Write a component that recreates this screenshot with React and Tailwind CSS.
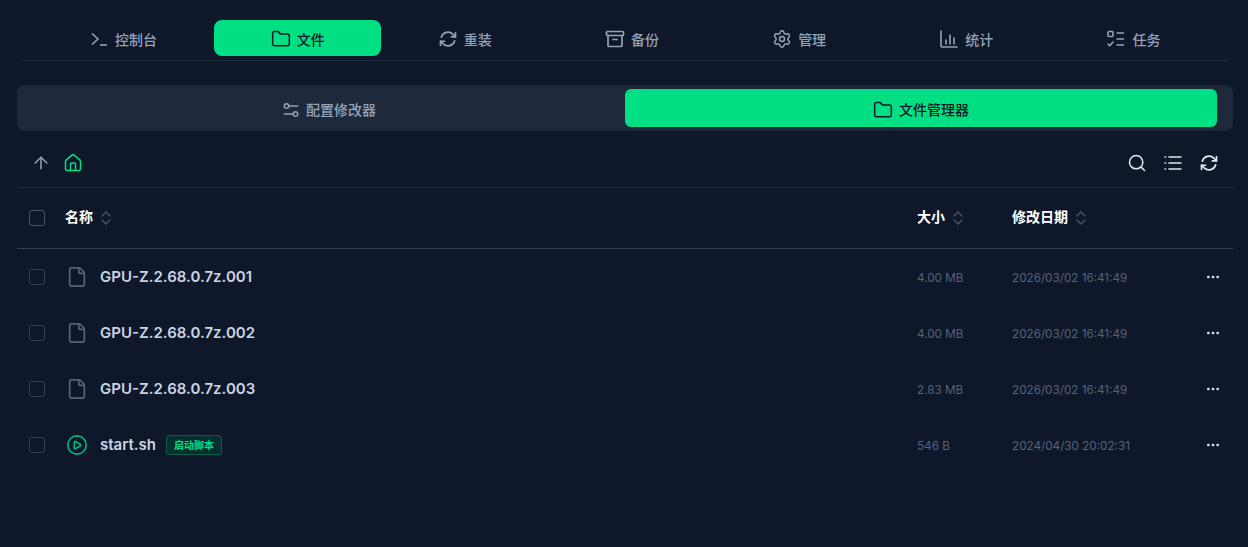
import {
  ArrowUp,
  Ellipsis,
  File,
  Folder,
  House,
  CirclePlay,
  Search,
  Settings,
} from "lucide-react";

const font = "font-['Inter','Noto_Sans_CJK_SC',sans-serif]";

const TerminalIcon = ({ className }) => (
  <svg viewBox="0 0 20 20" fill="none" stroke="currentColor" strokeWidth="1.6" className={className}>
    <path d="M3 4.5 9 10l-6 5.5" />
    <path d="M11 16h7" />
  </svg>
);

const RefreshIcon = ({ className }) => (
  <svg viewBox="0 0 24 24" fill="none" stroke="currentColor" strokeWidth="2" strokeLinecap="round" strokeLinejoin="round" className={className}>
    <path d="M16 9.35h5V4.35" />
    <path d="M3 19.65v-5h5" />
    <path d="M3 14.65l3.2 3.2a8.25 8.25 0 0 0 13.8-3.7" />
    <path d="M4 9.85a8.25 8.25 0 0 1 13.8-3.7l3.2 3.2" />
  </svg>
);

const ArchiveIcon = ({ className }) => (
  <svg viewBox="0 0 20 20" fill="none" stroke="currentColor" strokeWidth="1.7" strokeLinecap="round" strokeLinejoin="round" className={className}>
    <rect x="1.5" y="2.5" width="17" height="4" rx="1" />
    <path d="M3 6.5V16.5a1 1 0 0 0 1 1h12a1 1 0 0 0 1-1V6.5" />
    <path d="M8 10.5h4" />
  </svg>
);

const ChartIcon = ({ className }) => (
  <svg viewBox="0 0 20 20" fill="none" stroke="currentColor" strokeWidth="1.6" strokeLinecap="round" className={className}>
    <path d="M2 2v15a1 1 0 0 0 1 1h15" />
    <path d="M7 11v4M11 6v9M15 9v6" />
  </svg>
);

const TasksIcon = ({ className }) => (
  <svg viewBox="0 0 20 20" fill="none" stroke="currentColor" strokeWidth="1.6" strokeLinecap="round" strokeLinejoin="round" className={className}>
    <rect x="2" y="2.5" width="5" height="5" rx="1" />
    <path d="M2 15l1.7 1.7L7 13" />
    <path d="M11 4h6.5M11 10h6.5M11 16h6.5" />
  </svg>
);

const SliderIcon = ({ className }) => (
  <svg viewBox="0 0 20 20" fill="none" stroke="currentColor" strokeWidth="1.6" strokeLinecap="round" className={className}>
    <circle cx="5" cy="5.5" r="2.5" />
    <path d="M7.5 5.5h10" />
    <circle cx="15" cy="14.5" r="2.5" />
    <path d="M2.5 14.5h10" />
  </svg>
);

const ListIcon = ({ className }) => (
  <svg viewBox="0 0 20 20" fill="none" stroke="currentColor" strokeWidth="1.6" strokeLinecap="round" className={className}>
    <path d="M6 4h12M6 10h12M6 16h12" />
    <path d="M2 4h.5M2 10h.5M2 16h.5" />
  </svg>
);

const SortIcon = () => (
  <svg viewBox="0 0 10 16" fill="none" stroke="currentColor" strokeWidth="1.4" strokeLinecap="round" strokeLinejoin="round" className="h-4 w-[10px] text-[#475569]">
    <path d="M1 6 5 2l4 4" />
    <path d="M1 10l4 4 4-4" />
  </svg>
);

const tabs = [
  { label: "控制台", icon: TerminalIcon },
  { label: "文件", icon: Folder, active: true },
  { label: "重装", icon: RefreshIcon },
  { label: "备份", icon: ArchiveIcon },
  { label: "管理", icon: Settings },
  { label: "统计", icon: ChartIcon },
  { label: "任务", icon: TasksIcon },
];

const files = [
  { name: "GPU-Z.2.68.0.7z.001", size: "4.00 MB", date: "2026/03/02 16:41:49" },
  { name: "GPU-Z.2.68.0.7z.002", size: "4.00 MB", date: "2026/03/02 16:41:49" },
  { name: "GPU-Z.2.68.0.7z.003", size: "2.83 MB", date: "2026/03/02 16:41:49" },
  { name: "start.sh", size: "546 B", date: "2024/04/30 20:02:31", script: true },
];

const Checkbox = ({ header }) => (
  <span className={`block h-4 w-4 rounded-[3px] border ${header ? "border-[#475569]" : "border-[#334155]"}`} />
);

export default function App() {
  return (
    <div className={`${font} relative h-[547px] overflow-hidden bg-[#0f172a] pl-[17px] pr-[15px] pt-5`}>
      <nav className="grid h-[41px] grid-cols-7 rounded-b-lg border-b border-[#1e293b] pl-[30px] pr-[16px]">
        {tabs.map(({ label, icon: Icon, active }, i) => (
          <button
            key={label}
            className={`flex h-9 items-center justify-center gap-1.5 rounded-lg text-sm font-medium ${
              active ? "bg-[#00df82] text-[#0f172a]" : "text-[#94a3b8]"
            } ${i === 0 ? "pr-[15px]" : ""}`}
          >
            <Icon className="mt-0.5 h-5 w-5" strokeWidth={1.8} />
            <span className="pt-[3px]">{label}</span>
          </button>
        ))}
      </nav>

      <div className="mt-6 grid h-[46px] grid-cols-2 rounded-lg bg-[#1e293b] px-4 py-1">
        <button className="flex items-center justify-center gap-1.5 rounded-md text-sm font-medium text-[#94a3b8]">
          <SliderIcon className="mt-1 h-[18px] w-[18px]" />
          <span className="pt-1">配置修改器</span>
        </button>
        <button className="flex items-center justify-center gap-1.5 rounded-md bg-[#00df82] text-sm font-medium text-[#0f172a]">
          <Folder className="mt-1 h-5 w-5" strokeWidth={1.8} />
          <span className="pt-1">文件管理器</span>
        </button>
      </div>

      <div className="mt-[9px] flex h-[48px] items-center justify-between border-b border-[#1e293b] px-[14px] pb-0.5">
        <div className="flex items-center gap-3">
          <ArrowUp className="h-5 w-5 text-[#94a3b8]" strokeWidth={1.8} />
          <House className="h-5 w-5 text-[#00df82]" strokeWidth={1.8} />
        </div>
        <div className="flex items-center gap-4 text-[#e2e8f0]">
          <Search className="h-5 w-5" strokeWidth={1.8} />
          <ListIcon className="h-5 w-5" />
          <RefreshIcon className="h-5 w-5" />
        </div>
      </div>

      <div className="flex h-[61px] items-center border-b border-[#334155] pl-3 text-sm font-bold text-white">
        <Checkbox header />
        <div className="ml-5 flex w-[852px] items-center gap-2">
          <span className="pb-0.5">名称</span>
          <SortIcon />
        </div>
        <div className="flex w-[95px] items-center gap-2">
          <span className="pb-0.5">大小</span>
          <SortIcon />
        </div>
        <div className="flex items-center gap-2">
          <span className="pb-0.5">修改日期</span>
          <SortIcon />
        </div>
      </div>

      {files.map((file) => (
        <div key={file.name} className="relative flex h-14 items-center pl-3">
          <Checkbox />
          <div className="ml-5 flex w-[852px] items-center">
            {file.script ? (
              <CirclePlay className="ml-px h-[22px] w-[22px] text-[#00b87a]" strokeWidth={1.8} />
            ) : (
              <File className="ml-px h-[22px] w-[22px] text-[#566479]" strokeWidth={1.8} />
            )}
            <span className="ml-3 text-[15px] font-semibold text-[#cbd5e1]">{file.name}</span>
            {file.script && (
              <span className="ml-[10px] rounded-[3px] border border-[#065f46] bg-[#06302f] px-[7px] py-0.5 text-[10px] leading-[14px] font-bold text-[#00df82]">
                启动脚本
              </span>
            )}
          </div>
          <div className="w-[95px] pt-[3px] text-[11.7px] text-[#566479]">{file.size}</div>
          <div className="pt-[3px] text-[11.7px] text-[#566479]">{file.date}</div>
          <Ellipsis className="absolute right-[12px] h-4 w-4 text-[#e2e8f0]" strokeWidth={2} />
        </div>
      ))}
    </div>
  );
}
